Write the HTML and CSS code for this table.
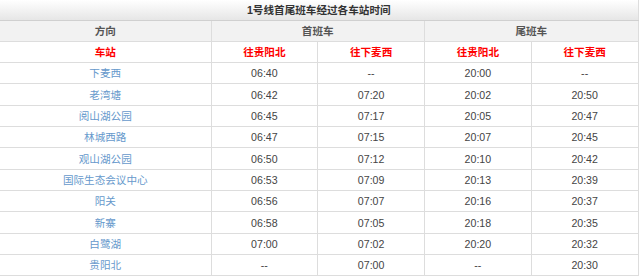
FILE: index.html
```html
<!DOCTYPE html>
<html lang="zh-CN">
<head>
<meta charset="utf-8">
<title>1号线首尾班车经过各车站时间</title>
<link rel="stylesheet" href="styles.css">
</head>
<body>
<table class="timetable">
  <colgroup>
    <col class="c-station">
    <col class="c-time">
    <col class="c-time">
    <col class="c-time">
    <col class="c-time">
  </colgroup>
  <thead>
    <tr class="title-row"><th colspan="5">1号线首尾班车经过各车站时间</th></tr>
    <tr class="group-row"><th>方向</th><th colspan="2">首班车</th><th colspan="2">尾班车</th></tr>
    <tr class="dir-row"><th>车站</th><th>往贵阳北</th><th>往下麦西</th><th>往贵阳北</th><th>往下麦西</th></tr>
  </thead>
  <tbody>
    <tr><td class="st">下麦西</td><td>06:40</td><td>--</td><td>20:00</td><td>--</td></tr>
    <tr><td class="st">老湾塘</td><td>06:42</td><td>07:20</td><td>20:02</td><td>20:50</td></tr>
    <tr><td class="st">阅山湖公园</td><td>06:45</td><td>07:17</td><td>20:05</td><td>20:47</td></tr>
    <tr><td class="st">林城西路</td><td>06:47</td><td>07:15</td><td>20:07</td><td>20:45</td></tr>
    <tr><td class="st">观山湖公园</td><td>06:50</td><td>07:12</td><td>20:10</td><td>20:42</td></tr>
    <tr><td class="st">国际生态会议中心</td><td>06:53</td><td>07:09</td><td>20:13</td><td>20:39</td></tr>
    <tr><td class="st">阳关</td><td>06:56</td><td>07:07</td><td>20:16</td><td>20:37</td></tr>
    <tr><td class="st">新寨</td><td>06:58</td><td>07:05</td><td>20:18</td><td>20:35</td></tr>
    <tr><td class="st">白鹭湖</td><td>07:00</td><td>07:02</td><td>20:20</td><td>20:32</td></tr>
    <tr><td class="st">贵阳北</td><td>--</td><td>07:00</td><td>--</td><td>20:30</td></tr>
  </tbody>
</table>
</body>
</html>
```
FILE: styles.css
```css
html, body {
  margin: 0;
  padding: 0;
  background: #ffffff;
}

.timetable {
  width: 638px;
  border-collapse: collapse;
  table-layout: fixed;
  font-family: "Liberation Sans", "Noto Sans CJK SC", sans-serif;
  font-size: 10.6px;
  color: #444444;
}

.c-station { width: 211px; }
.c-time { width: 106.75px; }

.timetable th,
.timetable td {
  padding: 0;
  text-align: center;
  vertical-align: middle;
  border: 1px solid #dddddd;
  line-height: 14px;
}

.timetable tr > :first-child { border-left: none; }

.timetable tr { height: 21.33px; }

.timetable tr.title-row { height: 20px; }

.title-row th {
  border-top: none;
  border-bottom: 1px solid #d0d0d0;
  background: linear-gradient(#ffffff, #e6e6e6);
  color: #333333;
  font-weight: bold;
}

.group-row th {
  background: #f2f2f2;
  color: #555555;
  font-weight: bold;
}

.dir-row th {
  background: #ffffff;
  color: #ff0000;
  font-weight: bold;
}

.timetable td.st {
  color: #6699cc;
}
```
